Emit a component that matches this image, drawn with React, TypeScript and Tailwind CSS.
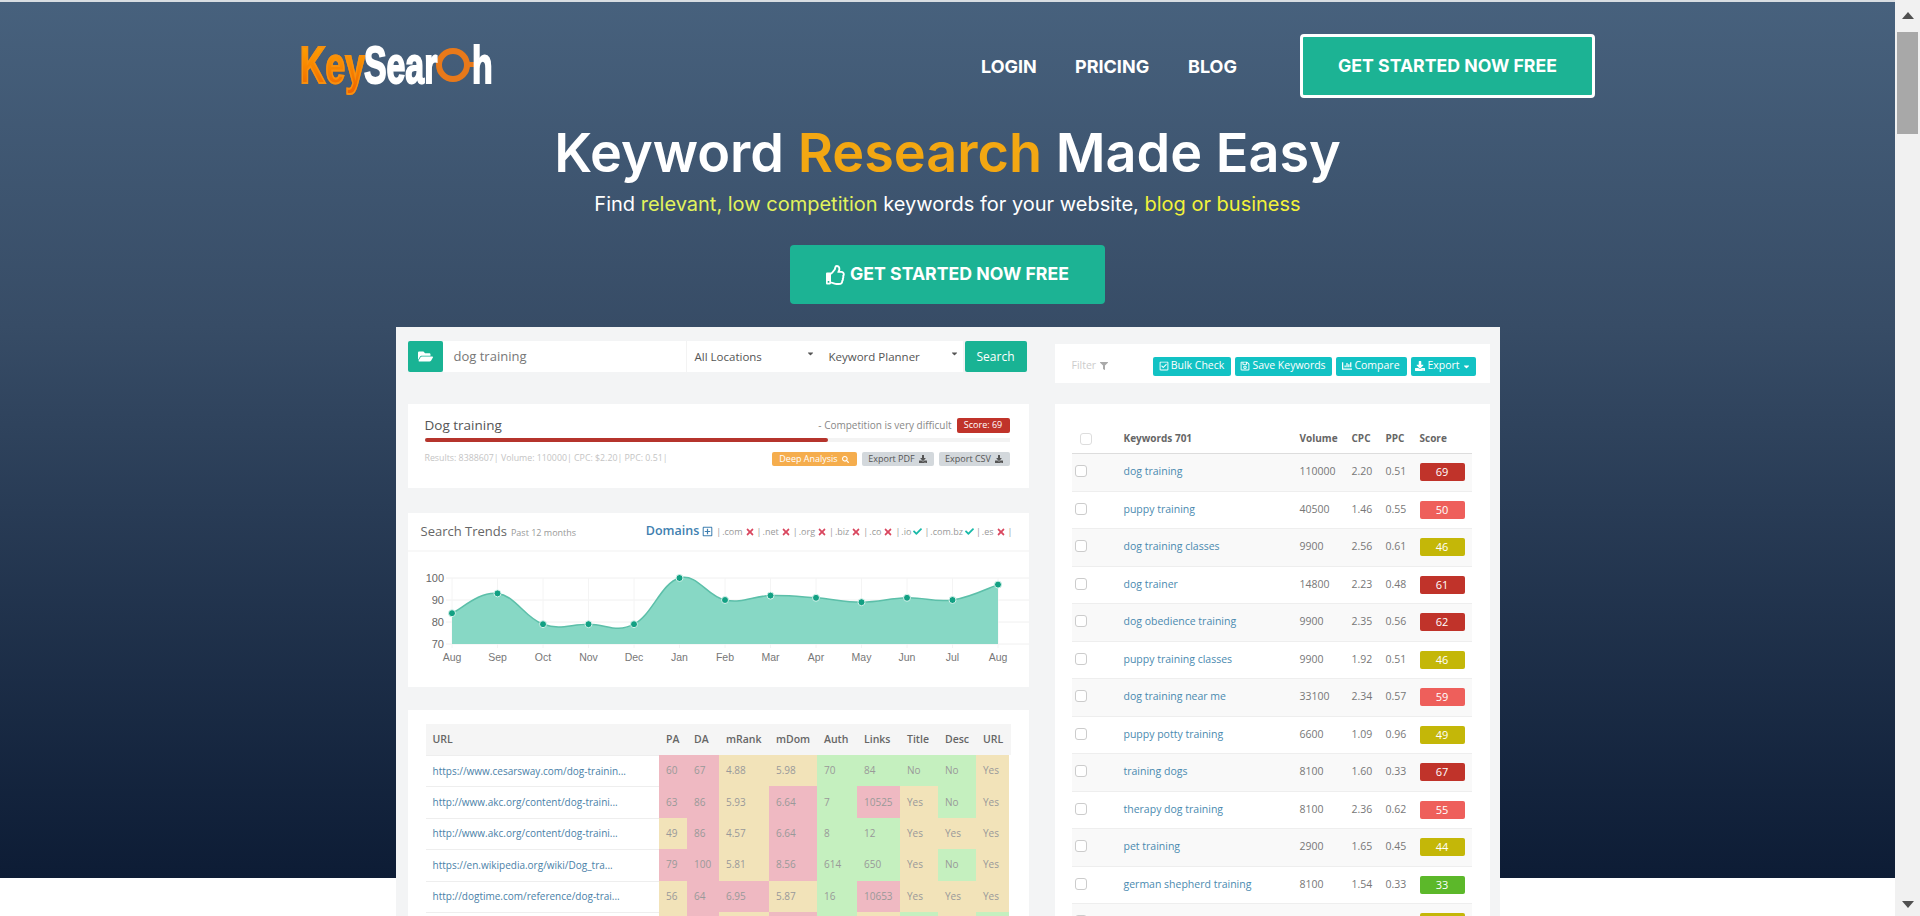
import {
  FaCaretDown,
  FaChartBar,
  FaCheck,
  FaDownload,
  FaFilter,
  FaFolderOpen,
  FaRegCheckSquare,
  FaRegPlusSquare,
  FaRegSave,
  FaRegThumbsUp,
  FaSearch,
  FaTimes,
} from "react-icons/fa"

const months = ["Aug", "Sep", "Oct", "Nov", "Dec", "Jan", "Feb", "Mar", "Apr", "May", "Jun", "Jul", "Aug"]
const trend = [84, 93, 79, 79, 79, 100, 90, 92, 91, 89, 91, 90, 97]

const domains = [
  { name: ".com", ok: false },
  { name: ".net", ok: false },
  { name: ".org", ok: false },
  { name: ".biz", ok: false },
  { name: ".co", ok: false },
  { name: ".io", ok: true },
  { name: ".com.bz", ok: true },
  { name: ".es", ok: false },
]

const heat: Record<string, string> = {
  r: "bg-[#efb9c2]",
  y: "bg-[#f2e3b9]",
  g: "bg-[#c5f0bf]",
}

const urlRows = [
  { url: "https://www.cesarsway.com/dog-trainin...", cells: ["60 r", "67 r", "4.88 y", "5.98 y", "70 g", "84 g", "No g", "No g", "Yes y"] },
  { url: "http://www.akc.org/content/dog-traini...", cells: ["63 r", "86 r", "5.93 y", "6.64 r", "7 g", "10525 r", "Yes y", "No g", "Yes y"] },
  { url: "http://www.akc.org/content/dog-traini...", cells: ["49 y", "86 r", "4.57 y", "6.64 r", "8 g", "12 g", "Yes y", "Yes y", "Yes y"] },
  { url: "https://en.wikipedia.org/wiki/Dog_tra...", cells: ["79 r", "100 r", "5.81 y", "8.56 r", "614 g", "650 g", "Yes y", "No g", "Yes y"] },
  { url: "http://dogtime.com/reference/dog-trai...", cells: ["56 y", "64 r", "6.95 r", "5.87 y", "16 g", "10653 r", "Yes y", "Yes y", "Yes y"] },
  { url: "", cells: [" y", " r", " y", " r", " g", " y", " g", " y", " g"] },
]

const keywords = [
  ["dog training", "110000", "2.20", "0.51", "69"],
  ["puppy training", "40500", "1.46", "0.55", "50"],
  ["dog training classes", "9900", "2.56", "0.61", "46"],
  ["dog trainer", "14800", "2.23", "0.48", "61"],
  ["dog obedience training", "9900", "2.35", "0.56", "62"],
  ["puppy training classes", "9900", "1.92", "0.51", "46"],
  ["dog training near me", "33100", "2.34", "0.57", "59"],
  ["puppy potty training", "6600", "1.09", "0.96", "49"],
  ["training dogs", "8100", "1.60", "0.33", "67"],
  ["therapy dog training", "8100", "2.36", "0.62", "55"],
  ["pet training", "2900", "1.65", "0.45", "44"],
  ["german shepherd training", "8100", "1.54", "0.33", "33"],
  ["", "", "", "", "45"],
]

function scoreColor(score: number) {
  if (score >= 60) return "bg-[#c0332a]"
  if (score >= 50) return "bg-[#ee5f5b]"
  if (score >= 40) return "bg-[#c4b708]"
  return "bg-[#5cb82a]"
}

function Logo() {
  return (
    <div className="relative -mt-[3px] flex h-[60px] w-[195px] font-['Liberation_Sans',sans-serif] text-[52px] font-bold leading-[60px]">
      <div className="w-[64px]">
        <span className="inline-block origin-left scale-x-[0.68] bg-linear-to-b from-[#ffae00] to-[#ee5f00] bg-clip-text text-transparent [-webkit-text-stroke:2px_#f7900f]">
          Key
        </span>
      </div>
      <div className="w-[72px]">
        <span className="inline-block origin-left scale-x-[0.65] text-white [-webkit-text-stroke:2px_white]">Sear</span>
      </div>
      <svg viewBox="0 0 42 36" className="h-[36px] w-[42px] self-center">
        <circle cx="17" cy="18" r="14" fill="none" stroke="#e8791a" strokeWidth="6" />
        <rect x="30" y="15" width="12" height="5" fill="#e8791a" />
      </svg>
      <div className="absolute left-[172px] top-0">
        <span className="inline-block origin-left scale-x-[0.65] text-white [-webkit-text-stroke:2px_white]">h</span>
      </div>
    </div>
  )
}

function TrendChart() {
  const pts = trend.map((v, i) => ({ x: 44 + 45.5 * i, y: 92 - (v - 70) * 2.2 }))
  let line = `M${pts[0].x} ${pts[0].y}`
  for (let i = 0; i < pts.length - 1; i++) {
    const prev = pts[Math.max(i - 1, 0)]
    const a = pts[i]
    const b = pts[i + 1]
    const next = pts[Math.min(i + 2, pts.length - 1)]
    const c1x = a.x + (b.x - prev.x) * 0.2
    const c1y = a.y + (b.y - prev.y) * 0.2
    const c2x = b.x - (next.x - a.x) * 0.2
    const c2y = b.y - (next.y - a.y) * 0.2
    line += ` C${c1x} ${c1y} ${c2x} ${c2y} ${b.x} ${b.y}`
  }
  return (
    <svg viewBox="0 0 621 134" className="block h-[134px] w-full">
      {[100, 90, 80, 70].map((v) => (
        <g key={v}>
          <line x1="38" x2="1000" y1={92 - (v - 70) * 2.2} y2={92 - (v - 70) * 2.2} stroke="#f0f0f0" />
          <text x="36" y={96 - (v - 70) * 2.2} textAnchor="end" fontSize="11" fill="#666" fontFamily="Liberation Sans">
            {v}
          </text>
        </g>
      ))}
      {pts.map((p, i) => (
        <line key={i} x1={p.x} x2={p.x} y1="26" y2="96" stroke="#f4f4f4" />
      ))}
      <path d={`${line} L${pts[12].x} 92 L${pts[0].x} 92 Z`} fill="#87d8c5" />
      <path d={line} fill="none" stroke="#5cbfa9" strokeWidth="1.5" />
      {pts.map((p, i) => (
        <circle key={i} cx={p.x} cy={p.y} r="3.5" fill="#12a083" stroke="#d6f3ec" />
      ))}
      {months.map((m, i) => (
        <text key={i} x={44 + 45.5 * i} y="109" textAnchor="middle" fontSize="10.5" fill="#777" fontFamily="Liberation Sans">
          {m}
        </text>
      ))}
    </svg>
  )
}

function GrayButton({ label, width }: { label: string; width: string }) {
  return (
    <span className={`flex h-[14px] items-center justify-center gap-1 rounded-[2px] bg-[#d3d8dc] text-[9px] text-[#555] ${width}`}>
      {label}
      <FaDownload className="text-[8px]" />
    </span>
  )
}

function TealButton({ label, width, icon, caret }: { label: string; width: string; icon: React.ReactNode; caret?: boolean }) {
  return (
    <span className={`flex h-[19px] items-center justify-center gap-[2px] rounded-[2px] bg-[#12c2c4] text-[10.5px] text-white ${width}`}>
      {icon}
      {label}
      {caret && <FaCaretDown className="text-[9px]" />}
    </span>
  )
}

function LeftColumn() {
  return (
    <div className="w-[621px] text-[#777]">
      <div className="flex h-[31px]">
        <div className="flex w-[35px] items-center justify-center rounded-[2px] bg-[#19b394] text-[15px] text-white">
          <FaFolderOpen />
        </div>
        <div className="flex w-[243px] items-center bg-white pl-[11px] text-[13px] text-[#777]">dog training</div>
        <div className="flex w-[135px] items-center justify-between border-l border-[#f3f3f3] bg-white pl-[8px] pr-[6px] text-[11.5px] text-[#555]">
          All Locations
          <FaCaretDown className="mb-[6px] text-[9px]" />
        </div>
        <div className="flex w-[142px] items-center justify-between bg-white pl-[8px] pr-[4px] text-[11.5px] text-[#555]">
          Keyword Planner
          <FaCaretDown className="mb-[6px] text-[9px]" />
        </div>
        <div className="ml-[2px] flex w-[62px] items-center justify-center rounded-[2px] bg-[#19b394] text-[12px] text-white">
          Search
        </div>
      </div>

      <div className="mt-[32px] h-[84px] bg-white pl-[17px] pr-[19px] pt-[10px]">
        <div className="flex h-[22px] items-center justify-between">
          <span className="text-[13.5px] text-[#555]">Dog training</span>
          <div className="flex items-center gap-[5px]">
            <span className="text-[10px] text-[#888]">- Competition is very difficult</span>
            <span className="flex h-[15px] w-[53px] items-center justify-center rounded-[2px] bg-[#c0332a] text-[9px] text-white">
              Score: 69
            </span>
          </div>
        </div>
        <div className="mt-[2px] h-[4px] bg-[#f3f3f3]">
          <div className="h-full w-[69%] rounded-full bg-[#b5342c]" />
        </div>
        <div className="mt-[10px] flex items-center justify-between">
          <span className="text-[8.8px] text-[#c4c4c4]">Results: 8388607| Volume: 110000| CPC: $2.20| PPC: 0.51|</span>
          <div className="flex gap-[5px]">
            <span className="flex h-[14px] w-[85px] items-center justify-center gap-1 rounded-[2px] bg-[#f5ad4d] text-[9px] text-white">
              Deep Analysis
              <FaSearch className="text-[7px]" />
            </span>
            <GrayButton label="Export PDF" width="w-[72px]" />
            <GrayButton label="Export CSV" width="w-[71px]" />
          </div>
        </div>
      </div>

      <div className="mt-[25px] h-[174px] bg-white">
        <div className="flex h-[39px] items-center justify-between border-b-2 border-[#f8f8f8] pl-[13px] pr-[16px]">
          <div className="flex items-baseline gap-[4px]">
            <span className="text-[13px] text-[#666]">Search Trends</span>
            <span className="text-[9px] text-[#999]">Past 12 months</span>
          </div>
          <div className="flex items-center text-[9px] text-[#999]">
            <span className="text-[12.5px] font-semibold text-[#3f7fb0]">Domains</span>
            <FaRegPlusSquare className="mx-[3px] text-[11px] text-[#3f7fb0]" />
            {domains.map((d) => (
              <span key={d.name} className="flex items-center">
                <span className="mr-[1px]">|</span>
                {d.name}
                {d.ok ? (
                  <FaCheck className="mx-[2px] text-[9px] text-[#18b9a8]" />
                ) : (
                  <FaTimes className="mx-[2px] text-[10px] text-[#d9475f]" />
                )}
              </span>
            ))}
            <span>|</span>
          </div>
        </div>
        <TrendChart />
      </div>

      <div className="mt-[23px] bg-white px-[18px] pt-[14px]">
        <div className="grid h-[31px] grid-cols-[233px_28px_32px_50px_48px_40px_43px_38px_38px_33px] items-center bg-[#f5f5f5] text-[10.5px] font-semibold text-[#666]">
          <span className="pl-[7px]">URL</span>
          {["PA", "DA", "mRank", "mDom", "Auth", "Links", "Title", "Desc", "URL"].map((h, i) => (
            <span key={i} className="pl-[7.5px]">
              {h}
            </span>
          ))}
        </div>
        {urlRows.map((row, r) => (
          <div key={r} className="grid h-[31.4px] grid-cols-[233px_28px_32px_50px_48px_40px_43px_38px_38px_33px] text-[10px]">
            <span className="flex items-center border-t border-[#eeeeee] pl-[7px] text-[#4a7fa8]">{row.url}</span>
            {row.cells.map((cell, i) => {
              const [text, tone] = cell.split(" ")
              return (
                <span key={i} className={`flex items-center pl-[7.5px] text-[#999] ${heat[tone]}`}>
                  {text}
                </span>
              )
            })}
          </div>
        ))}
      </div>
    </div>
  )
}

function RightColumn() {
  return (
    <div className="mt-[3px] w-[435px] text-[#777]">
      <div className="flex h-[39px] items-center justify-between bg-white pl-[17px] pr-[14px] pt-[5px]">
        <span className="flex items-center gap-[4px] text-[10.5px] text-[#ccc]">
          Filter
          <FaFilter className="text-[8px] text-[#aaa]" />
        </span>
        <div className="flex gap-[4px]">
          <TealButton label="Bulk Check" width="w-[78px]" icon={<FaRegCheckSquare className="text-[10px]" />} />
          <TealButton label="Save Keywords" width="w-[97px]" icon={<FaRegSave className="text-[10px]" />} />
          <TealButton label="Compare" width="w-[71px]" icon={<FaChartBar className="text-[10px]" />} />
          <TealButton label="Export" width="w-[65px]" icon={<FaDownload className="text-[10px]" />} caret />
        </div>
      </div>

      <div className="mt-[21px] bg-white px-[17px] pr-[18px]">
        <div className="grid h-[50px] grid-cols-[52px_176px_52px_34px_34px_52px] items-end border-b border-[#dddddd] pb-[7px] text-[10px] font-bold text-[#666]">
          <span className="mb-[1px] ml-[8px] block h-[12px] w-[12px] rounded-[3px] border border-[#dddddd]" />
          <span>Keywords 701</span>
          <span>Volume</span>
          <span>CPC</span>
          <span>PPC</span>
          <span>Score</span>
        </div>
        {keywords.map((k, i) => (
          <div
            key={i}
            className={`grid h-[37.5px] grid-cols-[52px_176px_52px_34px_34px_52px] items-center border-b border-[#eeeeee] text-[10.5px] ${
              i % 2 === 0 ? "bg-[#f9f9f9]" : "bg-white"
            }`}
          >
            <span className="mb-[2px] ml-[3px] block h-[12px] w-[12px] rounded-[3px] border border-[#cccccc] bg-white" />
            <span className="text-[#4a8ab0]">{k[0]}</span>
            <span>{k[1]}</span>
            <span>{k[2]}</span>
            <span>{k[3]}</span>
            <span className={`flex h-[18px] w-[45px] items-center justify-center rounded-[2px] text-[11px] text-white ${scoreColor(Number(k[4]))}`}>
              {i < 12 ? k[4] : ""}
            </span>
          </div>
        ))}
      </div>
    </div>
  )
}

function Scrollbar() {
  return (
    <div className="relative flex w-[25px] shrink-0 flex-col items-center bg-[#f1f1f1]">
      <div className="mt-[12px] h-0 w-0 border-x-[6px] border-b-[7px] border-x-transparent border-b-[#505050]" />
      <div className="mt-[13px] h-[102px] w-[21px] bg-[#a8a8a8]" />
      <div className="mt-[767px] h-0 w-0 border-x-[6px] border-t-[7px] border-x-transparent border-t-[#505050]" />
    </div>
  )
}

export default function App() {
  return (
    <div className="flex h-[916px] overflow-hidden bg-white font-['Open_Sans',sans-serif]">
      <div className="min-w-0 flex-1">
        <div className="h-[878px] border-t-2 border-[#d8dde2] bg-linear-to-b from-[#47617d] via-[#374c66] via-[37%] to-[#0d1c35]">
          <header className="mx-auto flex w-[1295px] items-center justify-between pt-[32px]">
            <Logo />
            <nav className="flex items-center font-['Inter',sans-serif] text-[18px] font-bold text-white">
              <a className="w-[94px]">LOGIN</a>
              <a className="w-[113px]">PRICING</a>
              <a className="w-[112px]">BLOG</a>
              <a className="flex h-[64px] w-[295px] items-center justify-center rounded-[4px] border-[3px] border-white bg-[#1cb394] text-[17.7px]">
                GET STARTED NOW FREE
              </a>
            </nav>
          </header>

          <div className="mt-[25px] text-center font-['Inter',sans-serif]">
            <h1 className="text-[54px] font-semibold leading-[60px] text-white">
              Keyword <span className="text-[#f3a712]">Research</span> Made Easy
            </h1>
            <p className="mt-[7px] text-[20px] leading-[28px] text-white">
              Find <span className="text-[#e2f35c]">relevant, low competition</span> keywords for your website,{" "}
              <span className="text-[#f2f23a]">blog or business</span>
            </p>
            <a className="mx-auto mt-[27px] flex h-[59px] w-[315px] items-center justify-center gap-[4px] rounded-[4px] bg-[#1cb394] text-[17.7px] font-bold text-white">
              <FaRegThumbsUp className="text-[20px]" />
              GET STARTED NOW FREE
            </a>
          </div>

          <div className="mx-auto mt-[23px] flex w-[1104px] gap-[26px] bg-[#f3f4f5] pl-[12px] pt-[14px]">
            <LeftColumn />
            <RightColumn />
          </div>
        </div>
      </div>
      <Scrollbar />
    </div>
  )
}
